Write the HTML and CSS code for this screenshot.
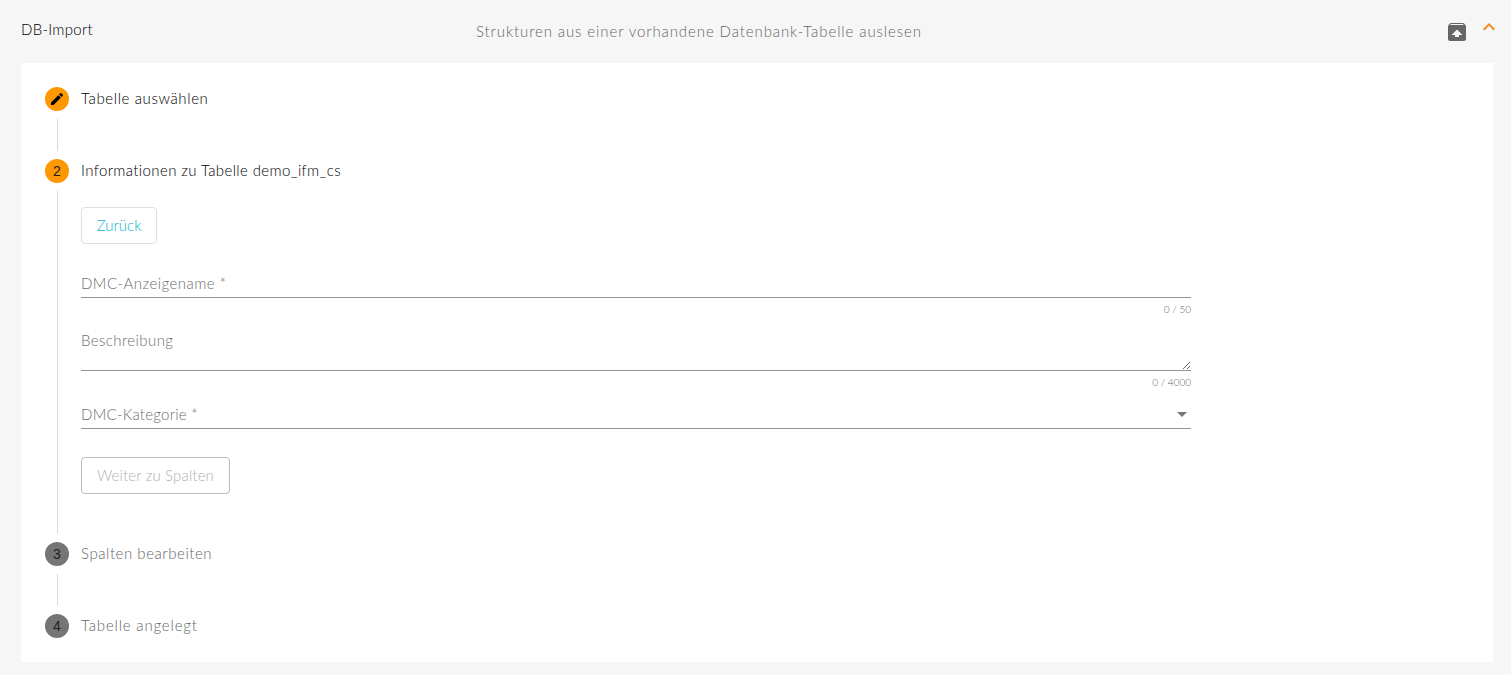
FILE: index.html
```html
<!DOCTYPE html>
<html lang="de">
<head>
<meta charset="utf-8">
<title>DB-Import</title>
<link rel="stylesheet" href="styles.css">
</head>
<body>
<main class="panel">
  <header class="panel-head">
    <div class="panel-title">DB-Import</div>
    <div class="panel-desc">Strukturen aus einer vorhandene Datenbank-Tabelle auslesen</div>
    <svg class="icon-unarchive" viewBox="0 0 24 24" width="24" height="24"><path d="M20.55 5.22l-1.39-1.68C18.88 3.21 18.47 3 18 3H6c-.47 0-.88.21-1.15.55L3.46 5.22C3.17 5.57 3 6.01 3 6.5V19c0 1.1.89 2 2 2h14c1.1 0 2-.9 2-2V6.5c0-.49-.17-.93-.45-1.28zM12 9.5l5.5 5.5H14v2h-4v-2H6.5L12 9.5zM5.12 5l.82-1h12l.93 1H5.12z"/></svg>
    <svg class="icon-chevron" viewBox="0 0 24 24" width="24" height="24"><path d="M12 8l-6 6 1.41 1.41L12 10.83l4.59 4.58L18 14z"/></svg>
  </header>
  <section class="stepper">
    <div class="step-head">
      <span class="step-icon active"><svg viewBox="0 0 24 24" width="16" height="16"><path d="M3 17.25V21h3.75L17.81 9.94l-3.75-3.75L3 17.25zM20.71 7.04c.39-.39.39-1.02 0-1.41l-2.34-2.34c-.39-.39-1.02-.39-1.41 0l-1.83 1.83 3.75 3.75 1.83-1.83z"/></svg></span>
      <span class="step-label s1">Tabelle auswählen</span>
    </div>
    <div class="step-line short"></div>
    <div class="step-head">
      <span class="step-icon active">2</span>
      <span class="step-label s2">Informationen zu Tabelle demo_ifm_cs</span>
    </div>
    <div class="step-line body">
      <button class="btn btn-back" type="button">Zurück</button>
      <div class="field first">
        <div class="field-row"><label class="field-label name">DMC-Anzeigename *</label></div>
        <div class="hint">0 / 50</div>
      </div>
      <div class="field">
        <div class="field-row area"><label class="field-label desc">Beschreibung</label><textarea class="area-input"></textarea></div>
        <div class="hint">0 / 4000</div>
      </div>
      <div class="field">
        <div class="field-row select"><label class="field-label cat">DMC-Kategorie *</label><span class="caret"></span></div>
      </div>
      <button class="btn btn-next" type="button" disabled>Weiter zu Spalten</button>
    </div>
    <div class="step-head">
      <span class="step-icon idle">3</span>
      <span class="step-label muted s3">Spalten bearbeiten</span>
    </div>
    <div class="step-line short"></div>
    <div class="step-head">
      <span class="step-icon idle">4</span>
      <span class="step-label muted s4">Tabelle angelegt</span>
    </div>
  </section>
</main>
</body>
</html>
```
FILE: styles.css
```css
* { box-sizing: border-box; }
html, body { margin: 0; height: 100%; }
body {
  background: #f6f6f6;
  font-family: "Lato", "Liberation Sans", sans-serif;
  font-size: 15px;
  font-weight: 300;
  color: #000;
  overflow: hidden;
}
.panel { display: flex; flex-direction: column; }
.panel-head {
  display: flex;
  align-items: center;
  height: 63px;
  padding-left: 21px;
  padding-right: 10px;
}
.panel-title { width: 455px; letter-spacing: 0.28px; padding-bottom: 5px; }
.panel-desc { flex: 1; color: #666; letter-spacing: 0.9px; padding-bottom: 1px; }
.icon-unarchive { fill: #666; }
.icon-chevron { fill: #f58a1f; margin-left: 8px; margin-top: -9px; }
.stepper {
  margin: 0 18px 0 21px;
  height: 599px;
  background: #fff;
  padding: 24px 0 0 24px;
}
.step-head { display: flex; align-items: center; height: 24px; }
.step-icon {
  display: flex;
  align-items: center;
  justify-content: center;
  width: 24px;
  height: 24px;
  border-radius: 50%;
  font-size: 14px;
  font-weight: 400;
  font-family: "Liberation Sans", sans-serif;
  color: #212121;
}
.step-icon.active { background: #ff9800; }
.step-icon.idle { background: #757575; }
.step-label { margin-left: 12px; padding-bottom: 2px; letter-spacing: 0.62px; }
.s2 { letter-spacing: 0.38px; }
.muted { color: #666; }
.s3 { letter-spacing: 0.55px; }
.s4 { letter-spacing: 0.82px; }
.step-line {
  margin: 8px 0 8px 12px;
  border-left: 1px solid #d9d9d9;
}
.step-line.short { height: 32px; }
.step-line.body {
  height: 343px;
  padding: 16px 0 0 23px;
  display: flex;
  flex-direction: column;
  align-items: flex-start;
}
.btn {
  height: 37px;
  padding: 0 0 2px;
  background: #fff;
  border-radius: 4px;
  font: inherit;
}
.btn-back { width: 76px; border: 1px solid #e0e0e0; color: #10b0ce; letter-spacing: 0; }
.btn-next { width: 149px; margin-top: 28px; border: 1px solid #bdbdbd; color: #b0b0b0; letter-spacing: 0.15px; }
.field { width: 1110px; }
.field.first { margin-top: 28px; }
.field-row {
  position: relative;
  height: 26px;
  border-bottom: 1px solid #949494;
  line-height: 23px;
}
.field-row.area { height: 42px; }
.field-row.select { height: 27px; display: flex; justify-content: space-between; align-items: center; padding-bottom: 2px; }
.field-label { color: #6e6e6e; letter-spacing: 0.45px; }
.cat { letter-spacing: 0.25px; }
.desc { letter-spacing: 0.42px; }
.area .field-label { position: absolute; left: 0; top: 0; }
.area-input {
  display: block;
  width: 100%;
  height: 41px;
  border: 0;
  padding: 0;
  background: transparent;
  outline: none;
  resize: vertical;
}
.caret {
  width: 0;
  height: 0;
  margin-right: 4px;
  border-left: 5px solid transparent;
  border-right: 5px solid transparent;
  border-top: 5px solid #757575;
}
.hint {
  height: 12px;
  margin: 5px 0 14px;
  font-size: 10px;
  line-height: 12px;
  text-align: right;
  color: #666;
}
```
